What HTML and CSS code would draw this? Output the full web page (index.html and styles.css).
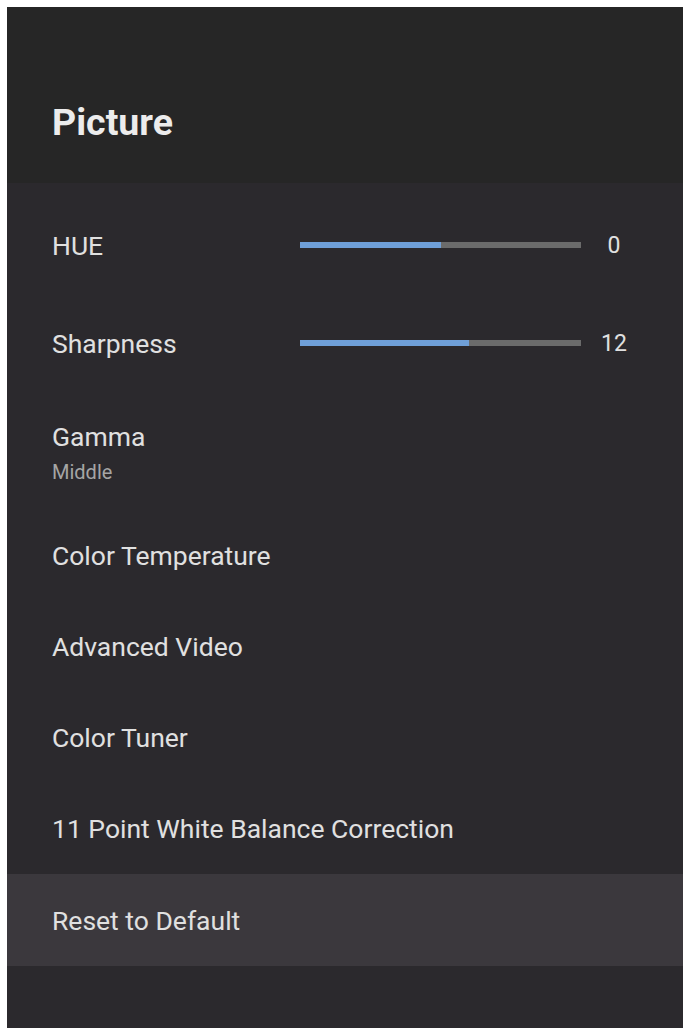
FILE: index.html
```html
<!DOCTYPE html>
<html lang="en">
<head>
  <meta charset="UTF-8" />
  <title>Picture</title>
  <link rel="stylesheet" href="styles.css">
</head>
<body>

  <div class="panel">
    <div class="header">
      <h1>Picture</h1>
    </div>

    <div class="menu">
      <div class="row slider-row first">
        <span class="label">HUE</span>
        <div class="track"><div class="fill" style="width: 50.2%"></div></div>
        <span class="value">0</span>
      </div>
      <div class="row slider-row">
        <span class="label">Sharpness</span>
        <div class="track"><div class="fill" style="width: 60.1%"></div></div>
        <span class="value">12</span>
      </div>
      <div class="row two-line">
        <span class="label">Gamma</span>
        <span class="sub">Middle</span>
      </div>
      <div class="row"><span class="label">Color Temperature</span></div>
      <div class="row"><span class="label">Advanced Video</span></div>
      <div class="row"><span class="label">Color Tuner</span></div>
      <div class="row"><span class="label">11 Point White Balance Correction</span></div>
      <div class="row selected"><span class="label">Reset to Default</span></div>
    </div>
  </div>

</body>
</html>
```

FILE: styles.css
```css
body {
  margin: 0;
  background: #fff;
  font-family: Roboto, 'Liberation Sans', sans-serif;
}
.panel {
  margin: 7px 4px 0 7px;
  height: 1021px;
  background: #2b292d;
  color: #e0e0e0;
  display: flex;
  flex-direction: column;
}
.header {
  height: 176px;
  background: #262626;
  padding: 0 45px;
  display: flex;
  align-items: center;
}
h1 {
  margin: 54px 0 0;
  font-size: 37.5px;
  font-weight: bold;
  color: #ececec;
}
.menu {
  padding-top: 15px;
}
.row {
  height: 91px;
  padding: 0 45px;
  display: flex;
  align-items: center;
  font-size: 26.5px;
}
.slider-row.first {
  height: 94px;
}
.slider-row {
  height: 102px;
  padding-right: 0;
}
.slider-row .label {
  width: 248px;
  flex: none;
}
.track {
  width: 281px;
  height: 6px;
  flex: none;
  background: #6b6b6b;
}
.fill {
  height: 100%;
  background: #6f9fd8;
}
.value {
  width: 66px;
  flex: none;
  text-align: center;
  font-size: 23px;
}
.two-line {
  height: 116px;
  flex-direction: column;
  align-items: flex-start;
  justify-content: center;
}
.sub {
  font-size: 20px;
  color: #a5a5a5;
  margin-top: 8px;
}
.selected {
  background: #3b383d;
  height: 92px;
}
```
